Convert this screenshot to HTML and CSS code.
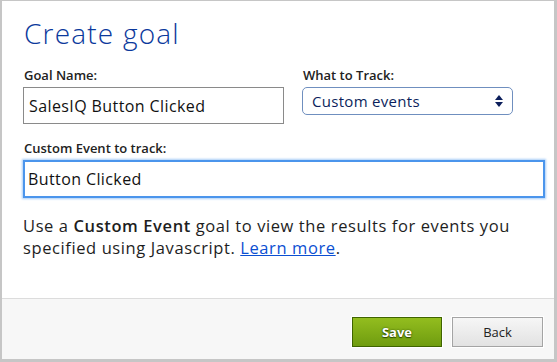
FILE: index.html
```html
<!DOCTYPE html>
<html>
  <head>
    <title>Create goal</title>
    <link rel="stylesheet" href="styles.css">
  </head>
  <body>
    <div class="dialog">
      <div class="dialog-body">
        <h2>Create goal</h2>
        <div class="row">
          <div class="field field-name">
            <label for="goalName">Goal Name:</label>
            <input type="text" id="goalName" class="text-input" value="SalesIQ Button Clicked" />
          </div>
          <div class="field field-track">
            <label for="trackType">What to Track:</label>
            <div class="select">
              <span>Custom events</span>
              <svg class="select-arrows" width="8" height="12" viewBox="0 0 8 12">
                <path d="M4 0 L8 5 L0 5 Z" fill="#0c1f5c" />
                <path d="M0 7 L8 7 L4 12 Z" fill="#0c1f5c" />
              </svg>
            </div>
          </div>
        </div>
        <div class="field">
          <label for="eventName">Custom Event to track:</label>
          <input type="text" id="eventName" class="text-input focused" value="Button Clicked" />
        </div>
        <div class="hint">
          <div class="hint-line">Use a <b>Custom Event</b> goal to view the results for events you</div>
          <div class="hint-line">specified using Javascript. <a href="#">Learn more</a>.</div>
        </div>
      </div>
      <div class="dialog-footer">
        <button class="btn btn-save">Save</button>
        <button class="btn btn-back">Back</button>
      </div>
    </div>
  </body>
</html>
```

FILE: styles.css
```css
* {
  box-sizing: border-box;
}

body {
  margin: 0;
  font-family: "Open Sans", Arial, sans-serif;
  color: #1a1a1a;
  background: #fff;
}

.dialog {
  width: 557px;
  height: 362px;
  border-style: solid;
  border-color: #c6c6c6;
  border-width: 1px 3px 3px 2px;
  display: flex;
  flex-direction: column;
}

.dialog-body {
  flex: 1;
  padding: 15px 11px 0 21px;
  background: #fff;
}

h2 {
  margin: 0;
  font-size: 28px;
  line-height: 34px;
  font-weight: 300;
  letter-spacing: 1.2px;
  color: #0b399c;
  padding-left: 1px;
}

.row {
  display: flex;
  gap: 18px;
  margin-top: 17px;
}

.field-name {
  width: 261px;
}

.field-track {
  width: 211px;
}

.field {
  margin-bottom: 16px;
}

.field label {
  display: block;
  font-size: 13px;
  line-height: 16px;
  font-weight: 600;
  color: #222;
  padding-left: 1px;
  margin-bottom: 4px;
}

.text-input {
  display: block;
  width: 100%;
  height: 37px;
  padding: 0 5px;
  border: 1px solid #8a8a8a;
  font-family: inherit;
  font-size: 16px;
  letter-spacing: 0.4px;
  color: #111;
  background: #fff;
  outline: none;
}

.text-input.focused {
  width: 522px;
  height: 38px;
  padding: 0 3px;
  border: 2px solid #4b95ec;
  box-shadow: 0 0 2px 1px #a9cdf7;
}

.select {
  display: flex;
  align-items: center;
  justify-content: space-between;
  height: 28px;
  padding: 0 9px 0 9px;
  border: 1px solid #6f8fbf;
  border-radius: 5px;
  font-size: 15px;
  letter-spacing: 0.3px;
  color: #0c1f5c;
  background: #fff;
}

.select-arrows {
  display: block;
}

.hint {
  margin-top: 17px;
  font-size: 16.5px;
  line-height: 22px;
  letter-spacing: 0.6px;
  color: #1e1e1e;
}

.hint-line {
  white-space: nowrap;
}

.hint b {
  font-weight: 600;
}

.hint a {
  color: #0b4fd2;
  text-decoration: underline;
}

.dialog-footer {
  height: 61px;
  border-top: 1px solid #dcdcdc;
  background: #f7f7f7;
  display: flex;
  justify-content: flex-end;
  gap: 10px;
  padding: 18px 11px 0 0;
}

.btn {
  width: 91px;
  height: 30px;
  font-family: inherit;
  font-size: 13px;
  cursor: pointer;
  box-shadow: 0 0 0 1px #fff;
}

.btn-save {
  width: 90px;
  color: #fff;
  font-weight: 700;
  text-shadow: 0 1px 1px #2c4a00, 0 0 2px #2c4a00;
  background: linear-gradient(#93bd1f, #6f9c0f);
  border: 1px solid #3f6400;
}

.btn-back {
  color: #222;
  background: linear-gradient(#f6f6f6, #e2e2e2);
  border: 1px solid #a4a4a4;
}
```
